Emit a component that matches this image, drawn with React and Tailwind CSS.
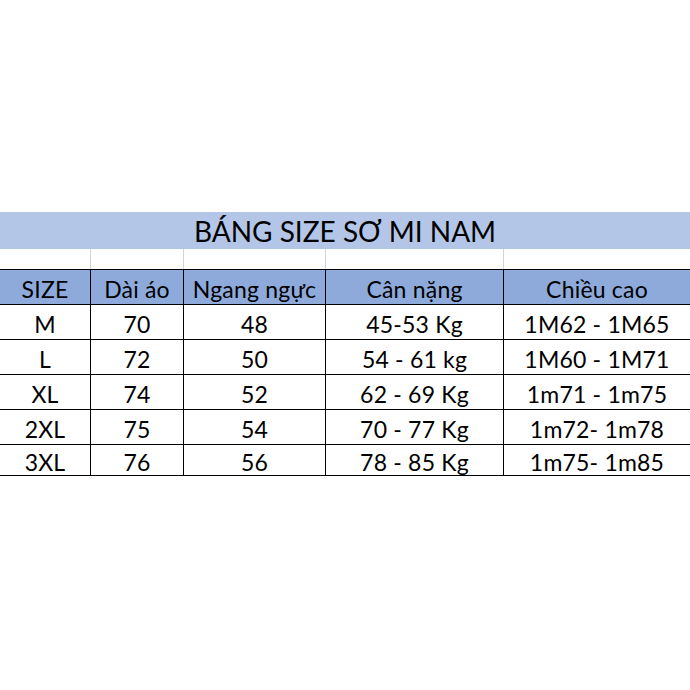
import React from 'react';

const rows = [
  ['M', '70', '48', '45-53 Kg', '1M62 - 1M65'],
  ['L', '72', '50', '54 - 61 kg', '1M60 - 1M71'],
  ['XL', '74', '52', '62 - 69 Kg', '1m71 - 1m75'],
  ['2XL', '75', '54', '70 - 77 Kg', '1m72- 1m78'],
  ['3XL', '76', '56', '78 - 85 Kg', '1m75- 1m85'],
];

const headers = ['SIZE', 'Dài áo', 'Ngang ngực', 'Cân nặng', 'Chiều cao'];

const cols = 'grid grid-cols-[90px_93px_142px_178px_187px]';

export default function App() {
  return (
    <div
      className="w-[690px] h-[690px] bg-white text-black overflow-hidden pt-[212px]"
      style={{ fontFamily: 'Lato, "Noto Sans", sans-serif' }}
    >
      {/* Title band */}
      <div className="h-[37px] bg-[#b4c6e7] flex items-center justify-center text-[28px] leading-none">
        BÁNG SIZE SƠ MI NAM
      </div>

      {/* Empty spreadsheet row */}
      <div className={`${cols} h-[20px]`}>
        {headers.map((h, i) => (
          <div key={h} className={i === 0 ? '' : 'border-l border-[#d4d4d4]'} />
        ))}
      </div>

      {/* Header */}
      <div className={`${cols} h-[36px] bg-[#8eaadb] border-y border-black`}>
        {headers.map((h, i) => (
          <div
            key={h}
            className={`flex items-center justify-center pt-[4px] text-[23px] leading-none tracking-[0.2px] ${i === 0 ? '' : 'border-l border-black'}`}
          >
            {h}
          </div>
        ))}
      </div>

      {/* Data rows */}
      {rows.map((r, ri) => (
        <div
          key={r[0]}
          className={`${cols} ${ri === rows.length - 1 ? 'h-[31px]' : 'h-[35px]'} border-b border-black`}
        >
          {r.map((c, i) => (
            <div
              key={i}
              className={`flex items-center justify-center pt-[4px] text-[23px] leading-none tracking-[0.2px] ${i === 0 ? '' : 'border-l border-black'}`}
            >
              {c}
            </div>
          ))}
        </div>
      ))}
    </div>
  );
}
